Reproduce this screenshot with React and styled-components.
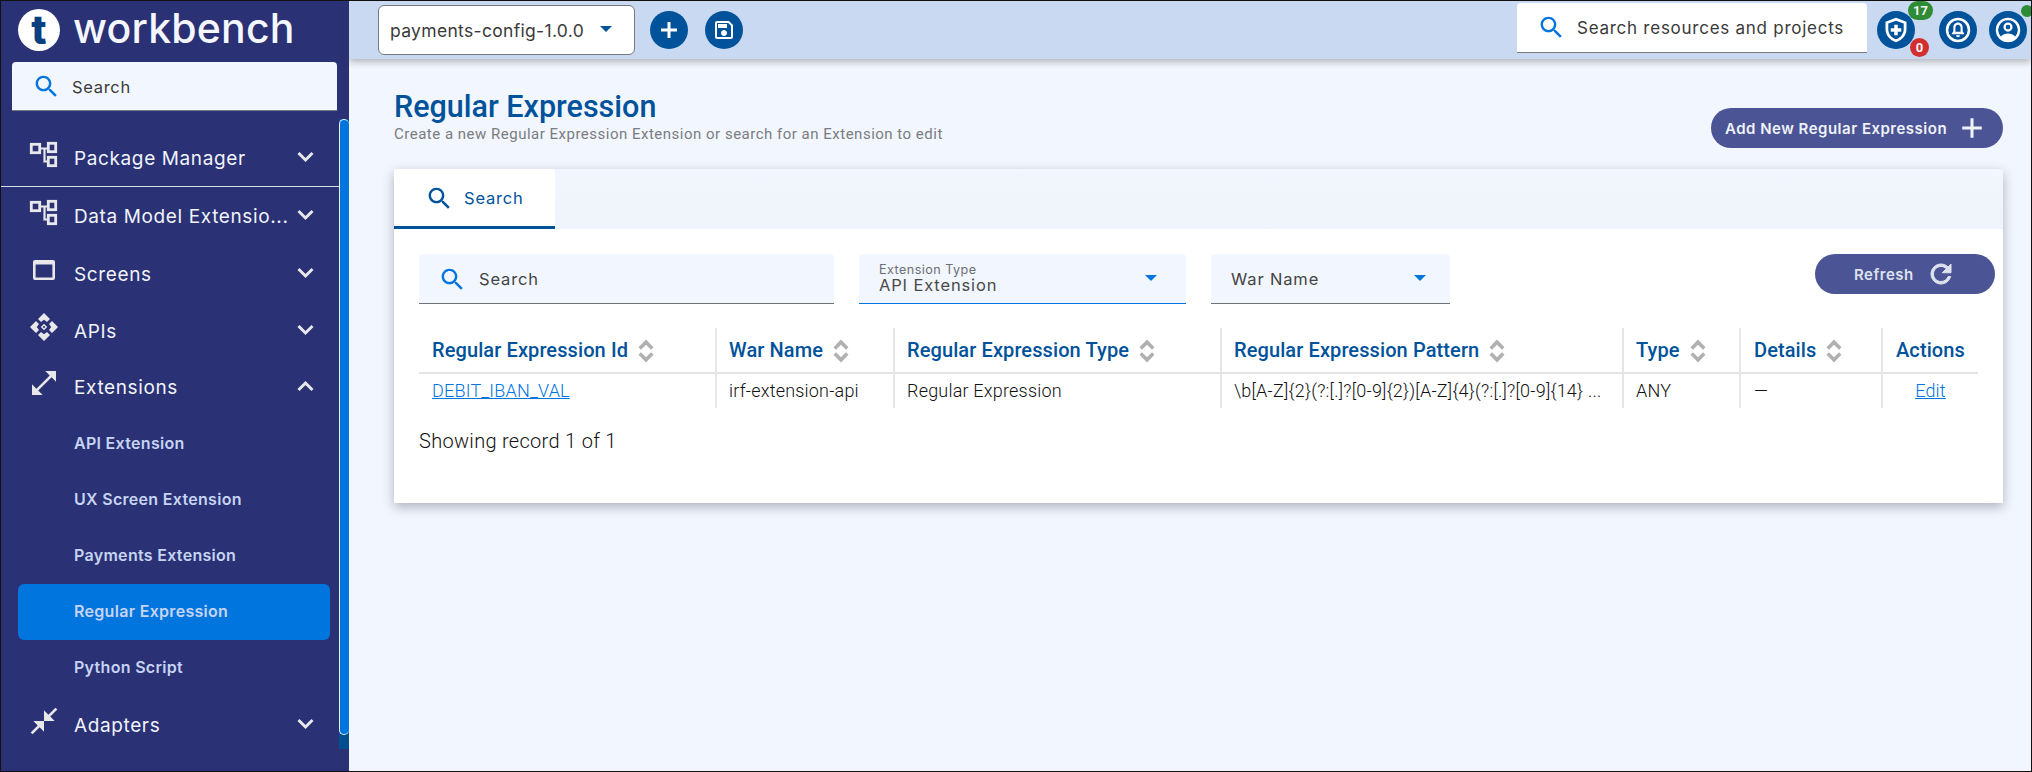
import React from "react";
import styled, { createGlobalStyle } from "styled-components";

const Global = createGlobalStyle`
  html, body { margin: 0; padding: 0; background: #f2f6fe; }
  * { box-sizing: border-box; }
`;

const WORK = `"Inter", "Noto Sans", sans-serif`;
const ROBOTO = `"Roboto", "Liberation Sans", sans-serif`;
const BLUE = "#00529b";

const Frame = styled.div`
  position: relative;
  display: flex;
  width: 2032px;
  height: 772px;
  border: 1px solid #111;
  overflow: hidden;
  background: #f2f6fe;
  font-family: ${WORK};
`;

const Sidebar = styled.aside`
  position: relative;
  flex: 0 0 348px;
  height: 100%;
  background: #2a3175;
  color: #eef1f8;
`;

const Brand = styled.div`
  display: flex;
  align-items: center;
  height: 61px;
  padding-left: 17px;
`;

const LogoDisc = styled.div`
  display: flex;
  align-items: center;
  justify-content: center;
  width: 42px;
  height: 42px;
  border-radius: 50%;
  background: #fff;
  color: #0a3f80;
  font-size: 40px;
  font-weight: 800;
  line-height: 42px;
  margin-top: -4px;
`;

const LogoWord = styled.div`
  margin-left: 13px;
  margin-top: -8px;
  font-size: 41px;
  font-weight: 500;
  letter-spacing: 0.2px;
  color: #f4f7fd;
`;

const SideSearch = styled.div`
  display: flex;
  align-items: center;
  width: 325px;
  height: 49px;
  margin-left: 11px;
  padding: 1px 0 0 20px;
  background: #f2f6fe;
  border-bottom: 1px solid #77797e;
  border-radius: 4px 4px 0 0;
  color: #3a3a3a;
  font-size: 16.5px;
  letter-spacing: 0.7px;
`;

const SearchGlyph = styled.svg`
  width: ${(p) => p.$size || 29}px;
  height: ${(p) => p.$size || 29}px;
  margin-right: ${(p) => p.$gap || 11}px;
  fill: ${(p) => p.$color || "#0075de"};
  flex: none;
`;

const Nav = styled.nav`
  margin-top: 18px;
`;

const NavRow = styled.div`
  position: relative;
  display: flex;
  align-items: center;
  width: 338px;
  height: ${(p) => p.$h || 58}px;
  padding: 1px 0 0 73px;
  font-size: 19px;
  letter-spacing: 0.62px;
  color: #f1f3fa;
  border-bottom: ${(p) => (p.$divider ? "1px solid #d9deee" : "none")};
`;

const NavGlyph = styled.svg`
  position: absolute;
  left: ${(p) => p.$left}px;
  top: 50%;
  width: ${(p) => p.$w}px;
  height: ${(p) => p.$w}px;
  margin-top: ${(p) => -p.$w / 2 - 4}px;
  color: #e8e8ea;
  fill: currentColor;
`;

const Chevron = styled.svg`
  position: absolute;
  left: 295px;
  top: 50%;
  width: 19px;
  height: 12px;
  margin-top: -7px;
  fill: none;
  stroke: #e8e8ea;
  stroke-width: 3;
`;

const SubRow = styled.div`
  position: relative;
  display: flex;
  align-items: center;
  height: 56px;
  width: 312px;
  margin-left: 17px;
  padding-left: 56px;
  padding-bottom: ${(p) => (p.$active ? 2 : 0)}px;
  top: ${(p) => (p.$active ? 1 : 0)}px;
  border-radius: 6px;
  background: ${(p) => (p.$active ? "#0075de" : "transparent")};
  color: #c6d4f2;
  font-size: 16px;
  font-weight: 600;
  letter-spacing: 0.3px;
`;

const Track = styled.div`
  position: absolute;
  left: 338px;
  top: 118px;
  width: 10px;
  height: 630px;
  background: #00508f;
`;

const Thumb = styled.div`
  width: 10px;
  height: 616px;
  background: #0075de;
  border-left: 1px solid #e8f0fb;
  border-top: 1px solid #e8f0fb;
  border-bottom: 1px solid #e8f0fb;
  border-radius: 5px;
`;

const Main = styled.main`
  position: relative;
  flex: 1;
  height: 100%;
`;

const TopBar = styled.header`
  position: relative;
  z-index: 2;
  display: flex;
  align-items: center;
  height: 58px;
  background: #c9d9f1;
  box-shadow: 0 3px 7px rgba(60, 60, 60, 0.35);
  padding-left: 29px;
`;

const PackageSelect = styled.div`
  position: relative;
  display: flex;
  align-items: center;
  width: 257px;
  height: 50px;
  margin-top: -1px;
  padding: 1px 0 0 11px;
  background: #fff;
  border: 1px solid #77797e;
  border-radius: 6px;
  color: #3a3a3a;
  font-size: 17.5px;
  letter-spacing: 0.32px;
`;

const Caret = styled.span`
  position: absolute;
  left: ${(p) => p.$left}px;
  top: ${(p) => p.$top}px;
  width: 0;
  height: 0;
  border-left: 6.5px solid transparent;
  border-right: 6.5px solid transparent;
  border-top: 6.5px solid ${(p) => p.$color};
`;

const RoundButton = styled.button`
  display: flex;
  align-items: center;
  justify-content: center;
  width: 38px;
  height: 38px;
  padding: 0;
  border: none;
  border-radius: 50%;
  background: ${BLUE};
  margin-left: ${(p) => p.$gap}px;
  position: ${(p) => (p.$badged ? "relative" : "static")};
  flex: none;
`;

const RoundGlyph = styled.svg`
  width: ${(p) => p.$w || 24}px;
  height: ${(p) => p.$w || 24}px;
  fill: #fff;
`;

const TopSearch = styled.div`
  display: flex;
  align-items: center;
  width: 350px;
  height: 50px;
  margin-left: auto;
  margin-top: -5px;
  padding: 1px 0 0 20px;
  background: #fff;
  border-bottom: 1px solid #77797e;
  border-radius: 4px 4px 0 0;
  color: #3a3a3a;
  font-size: 17px;
  letter-spacing: 0.74px;
`;

const Badge = styled.span`
  position: absolute;
  left: ${(p) => p.$left}px;
  top: ${(p) => p.$top}px;
  width: ${(p) => p.$w}px;
  height: 19px;
  border-radius: 10px;
  background: ${(p) => p.$bg};
  color: #f4f4f4;
  font-family: ${ROBOTO};
  font-size: 13px;
  font-weight: 700;
  line-height: 19px;
  text-align: center;
`;

const StatusDot = styled.span`
  position: absolute;
  z-index: 3;
  left: 1672px;
  top: 4px;
  width: 12px;
  height: 12px;
  border-radius: 50%;
  background: #2e8b36;
`;

const TopIcons = styled.div`
  display: flex;
  margin-left: 10px;
  margin-right: 4px;
`;

const Title = styled.h1`
  margin: 0;
  position: absolute;
  left: 45px;
  top: 88px;
  font-family: ${ROBOTO};
  font-size: 30.5px;
  font-weight: 500;
  line-height: 36px;
  color: ${BLUE};
`;

const Subtitle = styled.p`
  margin: 0;
  position: absolute;
  left: 45px;
  top: 124px;
  font-family: ${ROBOTO};
  font-size: 15px;
  line-height: 18px;
  letter-spacing: 0.5px;
  color: #7a7c80;
`;

const PillButton = styled.button`
  position: absolute;
  left: ${(p) => p.$left}px;
  top: ${(p) => p.$top}px;
  width: ${(p) => p.$w}px;
  height: 40px;
  display: flex;
  align-items: center;
  padding: 0 0 0 ${(p) => p.$pad}px;
  border: none;
  border-radius: 20px;
  background: #4b5596;
  color: ${(p) => p.$ink};
  font-family: ${WORK};
  font-size: 15px;
  font-weight: 600;
  letter-spacing: 0.5px;
`;

const PillIcon = styled.svg`
  width: ${(p) => p.$w}px;
  height: ${(p) => p.$w}px;
  margin-left: ${(p) => p.$gap}px;
  fill: ${(p) => p.$ink};
  flex: none;
`;

const Card = styled.section`
  position: absolute;
  left: 45px;
  top: 168px;
  width: 1609px;
  height: 334px;
  box-shadow: 0 4px 12px rgba(40, 50, 70, 0.35);
  background: #f2f6fe;
  border-radius: 4px 4px 0 0;
`;

const TabBar = styled.div`
  height: 60px;
  background: linear-gradient(#f2f6fe, #eff3fa);
`;

const Tab = styled.div`
  display: flex;
  align-items: center;
  width: 161px;
  height: 60px;
  padding: 1px 0 0 31px;
  background: #fff;
  border-bottom: 3px solid ${BLUE};
  border-radius: 4px 4px 0 0;
  color: ${BLUE};
  font-size: 16.5px;
  font-weight: 400;
  letter-spacing: 0.8px;
`;

const CardBody = styled.div`
  position: relative;
  height: 274px;
  background: #fff;
`;

const Field = styled.div`
  position: absolute;
  left: ${(p) => p.$left}px;
  top: 25px;
  width: ${(p) => p.$w}px;
  height: 50px;
  display: flex;
  align-items: center;
  padding: 1px 0 0 ${(p) => p.$pad}px;
  background: #f2f6fe;
  border-bottom: 1px solid ${(p) => (p.$focus ? "#0075de" : "#6f7175")};
  border-radius: 4px 4px 0 0;
  color: #444;
  font-size: 16.5px;
  letter-spacing: 0.85px;
`;

const FieldStack = styled.div`
  display: flex;
  flex-direction: column;
`;

const FieldLabel = styled.span`
  font-size: 12.6px;
  line-height: 13px;
  letter-spacing: 0.45px;
  color: #6d6f74;
`;

const FieldValue = styled.span`
  font-size: 16.5px;
  line-height: 19px;
  letter-spacing: 0.85px;
  color: #4a4a4a;
`;

const Table = styled.table`
  position: absolute;
  left: 25px;
  top: 99px;
  width: 1559px;
  table-layout: fixed;
  border-collapse: collapse;
  font-family: ${ROBOTO};
`;

const HeadCell = styled.th`
  width: ${(p) => p.$w}px;
  height: 45px;
  padding: 0 0 0 ${(p) => p.$pad || 12}px;
  text-align: left;
  font-size: 20px;
  font-weight: 500;
  letter-spacing: 0.1px;
  color: ${BLUE};
  border-left: ${(p) => (p.$first ? "none" : "2px solid #e6e6e6")};
  border-bottom: 2px solid #e4e4e4;
  white-space: nowrap;
`;

const BodyCell = styled.td`
  height: 35px;
  padding: 0 0 2px ${(p) => (p.$pad === undefined ? 12 : p.$pad)}px;
  font-size: 18px;
  font-weight: 300;
  letter-spacing: 0.2px;
  color: #111;
  border-left: ${(p) => (p.$first ? "none" : "2px solid #e6e6e6")};
  white-space: nowrap;
  overflow: hidden;
  text-align: ${(p) => p.$align || "left"};
`;

const PatternText = styled.span`
  letter-spacing: 0.24px;
`;

const CellLink = styled.a`
  color: #0075de;
  text-decoration: underline;
`;

const SortGlyph = styled.svg`
  display: inline-block;
  width: 18px;
  height: 24px;
  margin-left: 9px;
  vertical-align: -6px;
  fill: none;
  stroke: #b0b0b0;
  stroke-width: 3.4;
`;

const Showing = styled.div`
  position: absolute;
  left: 25px;
  top: 200px;
  font-family: ${ROBOTO};
  font-size: 20px;
  font-weight: 300;
  letter-spacing: 0.3px;
  line-height: 24px;
  color: #111;
`;

const SEARCH =
  "M15.5 14h-.79l-.28-.27C15.41 12.59 16 11.11 16 9.5 16 5.91 13.09 3 9.5 3S3 5.91 3 9.5 5.91 16 9.5 16c1.61 0 3.09-.59 4.23-1.57l.27.28v.79l5 4.99L20.49 19l-4.99-5zm-6 0C7.01 14 5 11.99 5 9.5S7.01 5 9.5 5 14 7.01 14 9.5 11.99 14 9.5 14z";

const Search = (p) => (
  <SearchGlyph viewBox="0 0 24 24" {...p}>
    <path d={SEARCH} />
  </SearchGlyph>
);

const ChevronIcon = ({ up }) => (
  <Chevron viewBox="0 0 19 12">
    <polyline points={up ? "2.5,10 9.5,3 16.5,10" : "2.5,2 9.5,9 16.5,2"} />
  </Chevron>
);

const PackageIcon = () => (
  <NavGlyph $left={27} $w={30} viewBox="0 0 30 30">
    <g fill="none" stroke="currentColor">
      <path strokeWidth="2.2" d="M12 9.5h8M16.5 9.5v13h3.5" />
      <rect x="3.3" y="5.3" width="8.4" height="8.4" strokeWidth="2.8" />
      <rect x="20.3" y="4.3" width="7.4" height="8.4" strokeWidth="2.8" />
      <rect x="20.3" y="18.3" width="7.4" height="8.4" strokeWidth="2.8" />
    </g>
  </NavGlyph>
);

const ScreenIcon = () => (
  <NavGlyph $left={29} $w={28} viewBox="0 0 28 28">
    <path fillRule="evenodd" d="M5 4h18a2 2 0 0 1 2 2v16a2 2 0 0 1-2 2H5a2 2 0 0 1-2-2V6a2 2 0 0 1 2-2zm.6 4.5v13h16.8v-13z" />
  </NavGlyph>
);

const ApiIcon = () => (
  <NavGlyph $left={28} $w={30} viewBox="0 0 30 30">
    <path d="M15 1l6 6-3 3-3-2.2-3 2.2-3-3zM15 29l-6-6 3-3 3 2.2 3-2.2 3 3zM1 15l6-6 3 3-2.2 3 2.2 3-3 3zM29 15l-6 6-3-3 2.2-3-2.2-3 3-3z" />
    <path d="M15 11.8l3.2 3.2-3.2 3.2-3.2-3.2zm0 1.9l-1.3 1.3 1.3 1.3 1.3-1.3z" fillRule="evenodd" />
  </NavGlyph>
);

const ExpandIcon = () => (
  <NavGlyph $left={27} $w={32} viewBox="0 0 24 24">
    <path d="M21 11V3h-8l3.29 3.29-10 10L3 13v8h8l-3.29-3.29 10-10z" />
  </NavGlyph>
);

const CollapseIcon = () => (
  <NavGlyph $left={27} $w={32} viewBox="0 0 24 24">
    <path d="M22 3.41l-5.29 5.3L20 12h-8V4l3.29 3.29L20.59 2 22 3.41zM3.41 22l5.3-5.29L12 20v-8H4l3.29 3.29L2 20.59 3.41 22z" />
  </NavGlyph>
);

const Sort = () => (
  <SortGlyph viewBox="0 0 16 23">
    <polyline points="2,9 8,3 14,9" />
    <polyline points="2,14 8,20 14,14" />
  </SortGlyph>
);

const columns = [
  { w: 297, t: "Regular Expression Id", first: true, pad: 13 },
  { w: 178, t: "War Name" },
  { w: 327, t: "Regular Expression Type" },
  { w: 402, t: "Regular Expression Pattern" },
  { w: 117, t: "Type" },
  { w: 142, t: "Details", pad: 13 },
  { w: 96, t: "Actions", noSort: true, pad: 13 },
];

export default function App() {
  return (
    <>
      <Global />
      <Frame>
        <Sidebar>
          <Brand>
            <LogoDisc>t</LogoDisc>
            <LogoWord>workbench</LogoWord>
          </Brand>
          <SideSearch>
            <Search />
            Search
          </SideSearch>
          <Nav>
            <NavRow $divider>
              <PackageIcon />
              Package Manager
              <ChevronIcon />
            </NavRow>
            <NavRow>
              <PackageIcon />
              Data Model Extensio...
              <ChevronIcon />
            </NavRow>
            <NavRow>
              <ScreenIcon />
              Screens
              <ChevronIcon />
            </NavRow>
            <NavRow $h={56}>
              <ApiIcon />
              APIs
              <ChevronIcon />
            </NavRow>
            <NavRow $h={56}>
              <ExpandIcon />
              Extensions
              <ChevronIcon up />
            </NavRow>
            <SubRow>API Extension</SubRow>
            <SubRow>UX Screen Extension</SubRow>
            <SubRow>Payments Extension</SubRow>
            <SubRow $active>Regular Expression</SubRow>
            <SubRow>Python Script</SubRow>
            <NavRow $h={60}>
              <CollapseIcon />
              Adapters
              <ChevronIcon />
            </NavRow>
          </Nav>
          <Track>
            <Thumb />
          </Track>
        </Sidebar>
        <Main>
          <TopBar>
            <PackageSelect>
              payments-config-1.0.0
              <Caret $left={221} $top={20} $color={BLUE} />
            </PackageSelect>
            <RoundButton $gap={15}>
              <RoundGlyph viewBox="0 0 24 24">
                <path d="M10.5 4h3v6.5H20v3h-6.5V20h-3v-6.5H4v-3h6.5z" />
              </RoundGlyph>
            </RoundButton>
            <RoundButton $gap={17}>
              <RoundGlyph viewBox="0 0 24 24">
                <path d="M17 3H5c-1.11 0-2 .9-2 2v14c0 1.1.89 2 2 2h14c1.1 0 2-.9 2-2V7l-4-4zm2 16H5V5h11.17L19 7.83V19zm-7-7c-1.66 0-3 1.34-3 3s1.34 3 3 3 3-1.34 3-3-1.34-3-3-3zM6 6h9v4H6z" />
              </RoundGlyph>
            </RoundButton>
            <TopSearch>
              <Search />
              Search resources and projects
            </TopSearch>
            <TopIcons>
              <RoundButton $gap={0} $badged>
                <RoundGlyph $w={28} viewBox="0 0 24 24">
                  <path fillRule="evenodd" d="M12 1.5l9 3.5v6.2c0 5.3-3.8 9.8-9 11.3-5.2-1.5-9-6-9-11.3V5zm0 2.5L5.4 6.5v4.8c0 4 2.8 7.4 6.6 8.7 3.8-1.3 6.6-4.7 6.6-8.7V6.5z" />
                  <path d="M10.5 7.5h3v3h3v3h-3v3h-3v-3h-3v-3h3z" />
                </RoundGlyph>
                <Badge $left={31} $top={-10} $w={25} $bg="#2e8b36">17</Badge>
                <Badge $left={33} $top={27} $w={19} $bg="#d32f2f">0</Badge>
              </RoundButton>
              <RoundButton $gap={24}>
                <RoundGlyph $w={28} viewBox="0 0 24 24">
                  <path fillRule="evenodd" d="M12 1.5a10.5 10.5 0 1 1 0 21 10.5 10.5 0 0 1 0-21zm0 2.2a8.3 8.3 0 1 0 0 16.6 8.3 8.3 0 0 0 0-16.6z" />
                  <path fillRule="evenodd" d="M12 5.6c2.6 0 4 2 4 4.3v3.2l1.3 2v.6H6.7v-.6l1.3-2V9.9c0-2.3 1.4-4.3 4-4.3zm0 1.8c-1.4 0-2.2 1.2-2.2 2.6v3.6h4.4V10c0-1.4-.8-2.6-2.2-2.6zM10.3 16.5h3.4a1.7 1.7 0 0 1-3.4 0z" />
                </RoundGlyph>
              </RoundButton>
              <RoundButton $gap={12}>
                <RoundGlyph $w={28} viewBox="0 0 24 24">
                  <path fillRule="evenodd" d="M12 1.5a10.5 10.5 0 1 1 0 21 10.5 10.5 0 0 1 0-21zm0 2.2a8.3 8.3 0 0 0-6.2 13.8c1.5-1.6 3.8-2.6 6.2-2.6s4.7 1 6.2 2.6A8.3 8.3 0 0 0 12 3.7z" />
                  <path fillRule="evenodd" d="M12 5.6a3.9 3.9 0 1 1 0 7.8 3.9 3.9 0 0 1 0-7.8zm0 1.9a2 2 0 1 0 0 4 2 2 0 0 0 0-4z" />
                </RoundGlyph>
              </RoundButton>
            </TopIcons>
          </TopBar>
          <StatusDot />
          <Title>Regular Expression</Title>
          <Subtitle>Create a new Regular Expression Extension or search for an Extension to edit</Subtitle>
          <PillButton $left={1362} $top={107} $w={292} $pad={14} $ink="#f0f2f9">
            Add New Regular Expression
            <PillIcon $w={26} $gap={12} $ink="#f0f2f9" viewBox="0 0 24 24">
              <path d="M10.6 3h2.8v7.6H21v2.8h-7.6V21h-2.8v-7.6H3v-2.8h7.6z" />
            </PillIcon>
          </PillButton>
          <Card>
            <TabBar>
              <Tab>
                <Search $color={BLUE} $gap={10} />
                Search
              </Tab>
            </TabBar>
            <CardBody>
              <Field $left={25} $w={415} $pad={19}>
                <Search $gap={12} />
                Search
              </Field>
              <Field $left={465} $w={327} $pad={20} $focus>
                <FieldStack>
                  <FieldLabel>Extension Type</FieldLabel>
                  <FieldValue>API Extension</FieldValue>
                </FieldStack>
                <Caret $left={286} $top={21} $color="#0075de" />
              </Field>
              <Field $left={817} $w={239} $pad={20}>
                War Name
                <Caret $left={203} $top={21} $color="#0075de" />
              </Field>
              <PillButton $left={1421} $top={25} $w={180} $pad={39} $ink="#dfe2ee">
                Refresh
                <PillIcon $w={30} $gap={12} $ink="#dfe2ee" viewBox="0 0 24 24">
                  <path stroke="#dfe2ee" strokeWidth="0.8" d="M17.65 6.35C16.2 4.9 14.21 4 12 4c-4.42 0-7.99 3.58-7.99 8s3.57 8 7.99 8c3.73 0 6.84-2.55 7.73-6h-2.08c-.82 2.33-3.04 4-5.65 4-3.31 0-6-2.69-6-6s2.69-6 6-6c1.66 0 3.14.69 4.22 1.78L13 11h7V4l-2.35 2.35z" />
                </PillIcon>
              </PillButton>
              <Table>
                <thead>
                  <tr>
                    {columns.map((c) => (
                      <HeadCell key={c.t} $w={c.w} $first={c.first} $pad={c.pad}>
                        {c.t}
                        {!c.noSort && <Sort />}
                      </HeadCell>
                    ))}
                  </tr>
                </thead>
                <tbody>
                  <tr>
                    <BodyCell $first $pad={13}>
                      <CellLink>DEBIT_IBAN_VAL</CellLink>
                    </BodyCell>
                    <BodyCell>irf-extension-api</BodyCell>
                    <BodyCell>Regular Expression</BodyCell>
                    <BodyCell>
                      <PatternText>{"\\b[A-Z]{2}(?:[.]?[0-9]{2})[A-Z]{4}(?:[.]?[0-9]{14} ..."}</PatternText>
                    </BodyCell>
                    <BodyCell>ANY</BodyCell>
                    <BodyCell $pad={13}>—</BodyCell>
                    <BodyCell $pad={0} $align="center">
                      <CellLink>Edit</CellLink>
                    </BodyCell>
                  </tr>
                </tbody>
              </Table>
              <Showing>Showing record 1 of 1</Showing>
            </CardBody>
          </Card>
        </Main>
      </Frame>
    </>
  );
}
